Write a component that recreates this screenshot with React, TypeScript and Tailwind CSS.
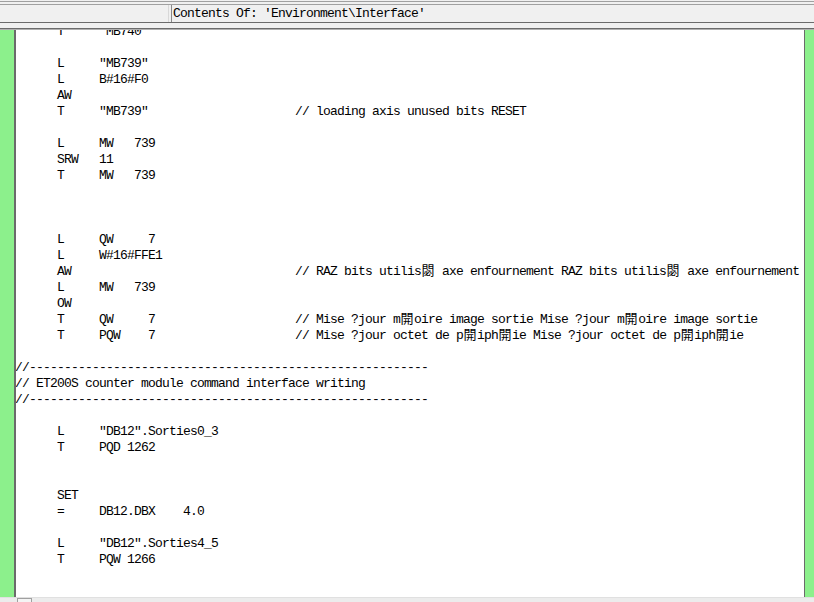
type Line = { op?: string; arg?: string; cmt?: string; raw?: string };

const COL_OP = 6;
const COL_ARG = 12;
const COL_CMT = 40;

const lines: Line[] = [
  { op: 'T', arg: '"MB740"' },
  {},
  { op: 'L', arg: '"MB739"' },
  { op: 'L', arg: 'B#16#F0' },
  { op: 'AW' },
  { op: 'T', arg: '"MB739"', cmt: '// loading axis unused bits RESET' },
  {},
  { op: 'L', arg: 'MW   739' },
  { op: 'SRW', arg: '11' },
  { op: 'T', arg: 'MW   739' },
  {},
  {},
  {},
  { op: 'L', arg: 'QW     7' },
  { op: 'L', arg: 'W#16#FFE1' },
  { op: 'AW', cmt: '// RAZ bits utilis閟 axe enfournement RAZ bits utilis閟 axe enfournement' },
  { op: 'L', arg: 'MW   739' },
  { op: 'OW' },
  { op: 'T', arg: 'QW     7', cmt: '// Mise ?jour m開oire image sortie Mise ?jour m開oire image sortie' },
  { op: 'T', arg: 'PQW    7', cmt: '// Mise ?jour octet de p開iph開ie Mise ?jour octet de p開iph開ie' },
  {},
  { raw: '//' + '-'.repeat(57) },
  { raw: '// ET200S counter module command interface writing' },
  { raw: '//' + '-'.repeat(57) },
  {},
  { op: 'L', arg: '"DB12".Sorties0_3' },
  { op: 'T', arg: 'PQD 1262' },
  {},
  {},
  { op: 'SET' },
  { op: '=', arg: 'DB12.DBX    4.0' },
  {},
  { op: 'L', arg: '"DB12".Sorties4_5' },
  { op: 'T', arg: 'PQW 1266' },
  {},
  {},
];

function pad(s: string, n: number) {
  return s.length >= n ? s : s + ' '.repeat(n - s.length);
}

function lineText(l: Line) {
  if (l.raw) return l.raw;
  if (!l.op) return '';
  let s = ' '.repeat(COL_OP) + l.op;
  if (l.arg || l.cmt) s = pad(s, COL_ARG) + (l.arg ?? '');
  if (l.cmt) s = pad(s, COL_CMT) + l.cmt;
  return s;
}

// CJK glyphs take two columns in the original editor font
function Text({ s }: { s: string }) {
  const parts = s.split(/([\u3000-\u9fff])/);
  return (
    <>
      {parts.map((p, i) =>
        /[\u3000-\u9fff]/.test(p) ? (
          <span key={i} className="inline-block w-[14px] text-center tracking-normal text-[13px]">{p}</span>
        ) : (
          <span key={i}>{p}</span>
        )
      )}
    </>
  );
}

const font = 'font-["Liberation_Mono","Noto_Sans_CJK_SC",monospace] text-[13px] tracking-[-0.8px] text-black';

export default function App() {
  return (
    <div className="w-[814px] h-[602px] bg-[#f0f0f0] flex flex-col overflow-hidden">
      <div className="h-[1px]" />
      <div className="h-[1px] bg-[#a0a0a0]" />
      <div className="h-[2px]" />

      <div className="h-[19px] flex border-t border-b border-t-[#a0a0a0] border-b-[#6b6b6b]">
        <div className="w-[169px] border-r border-[#d8d8d8]" />
        <div className="w-[2px]" />
        <div className={`flex-1 border-l border-[#8a8a8a] pl-[1px] leading-[17px] whitespace-pre ${font}`}>
          Contents Of: 'Environment\Interface'
        </div>
      </div>

      <div className="h-[5px]" />
      <div className="h-[1px] bg-[#6b6b6b]" />
      <div className="h-[1px] bg-[#b0b0b0]" />

      <div className="h-[567px] flex">
        <div className="w-[14px] bg-[#8cf08c]" />
        <div className="w-[2px] bg-[#6b6b6b]" />
        <div className="flex-1 bg-white overflow-hidden">
          <div className={`-mt-[6px] -ml-[1px] whitespace-pre ${font}`}>
            {lines.map((l, i) => (
              <div key={i} className="h-[16px] leading-[16px]">
                <Text s={lineText(l)} />
              </div>
            ))}
          </div>
        </div>
        <div className="w-[1px] bg-[#6b6b6b]" />
        <div className="w-[9px] bg-[#8cf08c]" />
      </div>

      <div className="h-[5px] bg-[#ececec] border-t border-[#e0e0e0] pl-[17px]">
        <div className="w-[15px] h-[5px] border-t border-l border-r border-[#a0a0a0] bg-[#f4f4f4]" />
      </div>
    </div>
  );
}
